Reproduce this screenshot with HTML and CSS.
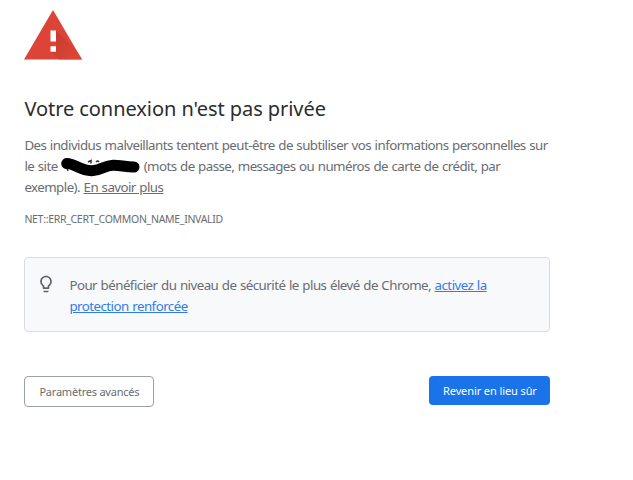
FILE: index.html
```html
<!DOCTYPE html>
<html lang="fr">
<head>
    <meta charset="utf-8">
    <meta name="viewport" content="width=device-width, initial-scale=1.0">
    <title>Erreur liée à la confidentialité</title>
    <link rel="stylesheet" href="styles.css">
</head>
<body>
    <div class="interstitial">
        <svg class="icon" viewBox="0 0 58 50">
            <defs>
                <clipPath id="triangle"><path d="M29 0L58 49.5H0Z"/></clipPath>
                <linearGradient id="shade" x1="0" y1="0" x2="1" y2="1">
                    <stop offset="0" stop-color="#b93529"/>
                    <stop offset="0.8" stop-color="#db4437"/>
                </linearGradient>
            </defs>
            <path d="M29 0L58 49.5H0Z" fill="#db4437"/>
            <path d="M32 20.5L60 48.5V50H35L26.5 41.7L32 36Z" fill="url(#shade)" opacity=".7" clip-path="url(#triangle)"/>
            <path d="M26.5 20.5h5.5v11h-5.500zM26.5 36.3h5.500v5.400h-5.500z" fill="#fff"/>
        </svg>
        <h1>Votre connexion n'est pas privée</h1>
        <p class="message">
            Des individus malveillants tentent peut-être de subtiliser vos informations personnelles sur<br>
            le site <span class="host"><svg class="scribble" viewBox="0 0 80 22"><path d="M27 6l3-1.500v3M35 6q2-2 3 0M5 10l2 5" fill="none" stroke="#333" stroke-width="1.500"/><path d="M5.700 7.500C13 7 19 15 31 14.700C41 14.500 43 9.500 52 9.200C59 9 64 11 73 11" fill="none" stroke="#000" stroke-width="11" stroke-linecap="round"/></svg></span> (mots de passe, messages ou numéros de carte de crédit, par<br>
            exemple). <a href="#">En savoir plus</a>
        </p>
        <div class="error-code">NET::ERR_CERT_COMMON_NAME_INVALID</div>
        <div class="promo">
            <svg class="bulb" viewBox="0 0 24 24">
                <path d="M9 21c0 .5.4 1 1 1h4c.6 0 1-.5 1-1v-1H9v1zm3-19C8.100 2 5 5.100 5 9c0 2.400 1.200 4.500 3 5.700V17c0 .5.4 1 1 1h6c.6 0 1-.5 1-1v-2.300c1.800-1.300 3-3.400 3-5.700 0-3.900-3.100-7-7-7zm2.900 11.100l-.9.600V16h-4v-2.300l-.9-.600C7.800 12.200 7 10.600 7 9c0-2.800 2.200-5 5-5s5 2.200 5 5c0 1.600-.8 3.200-2.100 4.100z"/>
            </svg>
            <p>Pour bénéficier du niveau de sécurité le plus élevé de Chrome, <a href="#">activez la<br>protection renforcée</a></p>
        </div>
        <div class="buttons">
            <button class="secondary">Paramètres avancés</button>
            <button class="primary">Revenir en lieu sûr</button>
        </div>
    </div>
</body>
</html>
```
FILE: styles.css
```css
body {
    margin: 0;
    background: #fff;
    color: #696c71;
    font-family: "Noto Sans", "Open Sans", sans-serif;
    font-size: 13.3px;
    line-height: 21px;
}
.interstitial {
    width: 526px;
    margin-left: 24.4px;
    padding-top: 10px;
}
.icon {
    display: block;
    width: 58px;
    height: 50px;
}
h1 {
    margin: 35px 0 0;
    color: #2b2c30;
    font-size: 20px;
    font-weight: 400;
    letter-spacing: -0.06px;
    line-height: 28px;
    white-space: nowrap;
}
.message {
    margin: 12px 0 0;
    letter-spacing: -0.55px;
    word-spacing: 0.6px;
    white-space: nowrap;
}
.message a {
    color: inherit;
}
.host {
    display: inline-block;
    width: 79px;
    height: 12px;
}
.scribble {
    display: block;
    width: 80px;
    height: 22px;
    margin-top: -3px;
}
.error-code {
    margin-top: 11px;
    font-size: 10.5px;
    letter-spacing: -0.3px;
    white-space: nowrap;
}
.promo {
    display: flex;
    box-sizing: border-box;
    height: 75px;
    margin-top: 27px;
    padding: 17px 12px;
    background: #f8f9fa;
    border: 1px solid #dadce0;
    border-radius: 4px;
}
.bulb {
    flex: none;
    width: 20px;
    height: 20px;
    margin: -1px 12px 0 -1px;
    padding-right: 1px;
    fill: #5f6368;
}
.promo p {
    margin: 0;
    letter-spacing: -0.53px;
    word-spacing: 0.6px;
    white-space: nowrap;
}
.promo a {
    color: #2f7cec;
}
.buttons {
    display: flex;
    justify-content: space-between;
    margin-top: 44px;
}
button {
    box-sizing: border-box;
    padding: 0;
    border-radius: 4px;
    font-family: inherit;
    font-size: 11px;
    white-space: nowrap;
}
.secondary {
    width: 130px;
    height: 31px;
    background: #fff;
    border: 1px solid #9aa0a6;
    color: #696c71;
    letter-spacing: -0.22px;
}
.primary {
    width: 121px;
    height: 29px;
    background: #1a73e8;
    border: none;
    color: #fff;
    letter-spacing: -0.1px;
}
```
